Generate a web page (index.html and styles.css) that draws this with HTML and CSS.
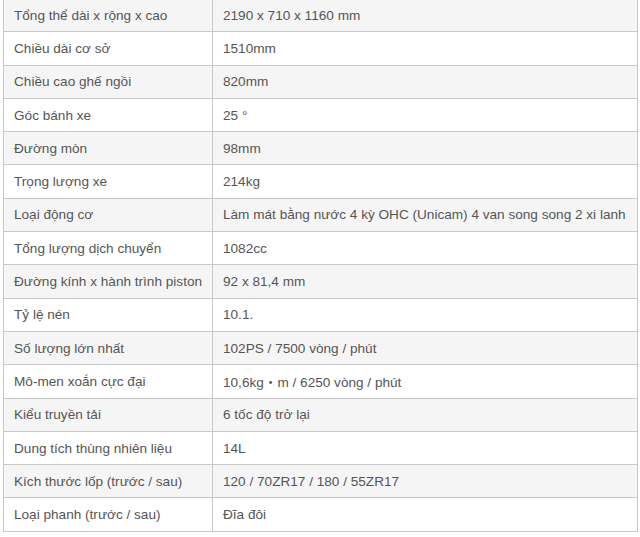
FILE: index.html
```html
<!DOCTYPE html>
<html lang="vi">
<head>
<meta charset="utf-8">
<link rel="stylesheet" href="styles.css">
</head>
<body>
<table class="specs">
<tbody>
<tr><td class="k">Tổng thể dài x rộng x cao</td><td class="v">2190 x 710 x 1160 mm</td></tr>
<tr><td class="k">Chiều dài cơ sở</td><td class="v">1510mm</td></tr>
<tr><td class="k">Chiều cao ghế ngồi</td><td class="v">820mm</td></tr>
<tr><td class="k">Góc bánh xe</td><td class="v">25 °</td></tr>
<tr><td class="k">Đường mòn</td><td class="v">98mm</td></tr>
<tr><td class="k">Trọng lượng xe</td><td class="v">214kg</td></tr>
<tr><td class="k">Loại động cơ</td><td class="v">Làm mát bằng nước 4 kỳ OHC (Unicam) 4 van song song 2 xi lanh</td></tr>
<tr><td class="k">Tổng lượng dịch chuyển</td><td class="v">1082cc</td></tr>
<tr><td class="k">Đường kính x hành trình piston</td><td class="v">92 x 81,4 mm</td></tr>
<tr><td class="k">Tỷ lệ nén</td><td class="v">10.1.</td></tr>
<tr><td class="k">Số lượng lớn nhất</td><td class="v">102PS / 7500 vòng / phút</td></tr>
<tr><td class="k">Mô-men xoắn cực đại</td><td class="v">10,6kg<span class="dot">・</span>m / 6250 vòng / phút</td></tr>
<tr><td class="k">Kiểu truyền tải</td><td class="v">6 tốc độ trở lại</td></tr>
<tr><td class="k">Dung tích thùng nhiên liệu</td><td class="v">14L</td></tr>
<tr><td class="k">Kích thước lốp (trước / sau)</td><td class="v">120 / 70ZR17 / 180 / 55ZR17</td></tr>
<tr><td class="k">Loại phanh (trước / sau)</td><td class="v">Đĩa đôi</td></tr>
</tbody>
</table>
</body>
</html>
```

FILE: styles.css
```css
html, body {
  margin: 0;
  padding: 0;
  background: #ffffff;
}
body {
  font-family: "Liberation Sans", Arial, "Noto Sans CJK JP", sans-serif;
  font-size: 13.6px;
  color: #555555;
}
.specs {
  border-collapse: collapse;
  width: 635px;
  margin: -1px 0 0 3px;
  table-layout: fixed;
}
.specs td {
  border: 1px solid #c8c8c8;
  height: 31.3px;
  padding: 1px 10px 0 10px;
  vertical-align: middle;
  line-height: 20px;
  white-space: nowrap;
}
.specs tr:first-child td {
  border-top: none;
}
.specs td.k {
  width: 188px;
}
.specs tr:nth-child(odd) td {
  background: #f5f5f5;
}
.dot {
  font-family: "Noto Sans CJK JP", sans-serif;
}
```
